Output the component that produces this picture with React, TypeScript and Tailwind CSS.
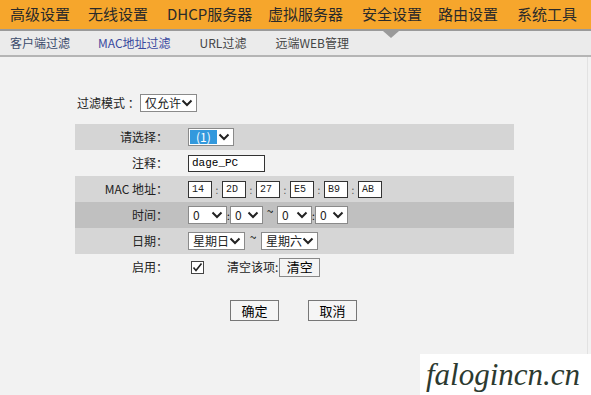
import React from "react";

const font = { fontFamily: '"Noto Sans CJK SC", "Liberation Sans", sans-serif' };

function Sel({ w, text, hl }: { w: number; text: string; hl?: boolean }) {
  return (
    <div
      className="h-[18px] border border-[#8a8a8a] bg-white flex items-center justify-between text-[12px] text-[#222] leading-none"
      style={{ width: w }}
    >
      <span className={hl ? "ml-[1px] h-[14px] px-[6px] bg-[#3399dd] text-white flex items-center" : "pl-[4px]"}>{text}</span>
      <svg width="12" height="10" viewBox="0 0 12 10" className="mr-[3px]">
        <path d="M1.5 2.5 L6 7 L10.5 2.5" stroke="#222" strokeWidth="2" fill="none" />
      </svg>
    </div>
  );
}

function Box({ v }: { v: string }) {
  return (
    <div className="w-[24px] h-[17px] border border-[#333] bg-white text-[10px] pl-[3px] flex items-center text-[#222]" style={{ fontFamily: '"Liberation Mono", monospace' }}>
      {v}
    </div>
  );
}

function Row({ label, bg, children }: { label: string; bg?: string; children: React.ReactNode }) {
  return (
    <div className={`h-[26px] flex items-center ${bg ?? ""}`}>
      <div className="w-[113px] text-right pr-[20px] text-[12px] text-[#222]">{label}</div>
      <div className="flex items-center">{children}</div>
    </div>
  );
}

export default function App() {
  return (
    <div className="w-[591px] h-[395px] bg-[#f2f2f2] relative overflow-hidden" style={font}>
      <div className="h-[29px] bg-[#f6a62c] flex items-center text-[15px] text-[#2a2a2a] pl-[10px] whitespace-nowrap">
        <span className="w-[78px]">高级设置</span>
        <span className="w-[79px]">无线设置</span>
        <span className="w-[101px]">DHCP服务器</span>
        <span className="w-[94px]">虚拟服务器</span>
        <span className="w-[76px]">安全设置</span>
        <span className="w-[79px]">路由设置</span>
        <span>系统工具</span>
      </div>
      <div className="h-[2px] bg-[#9a9a9a]" />
      <div className="h-[26px] bg-[#ebebeb] border-b-[2px] border-[#b5b5b5] flex items-center text-[12px] pl-[10px] relative">
        <div className="absolute left-[383px] top-0 w-0 h-0 border-l-[8px] border-r-[8px] border-t-[7px] border-l-transparent border-r-transparent border-t-[#9a9a9a]" />
        <span className="text-[#3a4a6a] mr-[28px]">客户端过滤</span>
        <span className="text-[#3a4aa0] mr-[29px]">MAC地址过滤</span>
        <span className="text-[#444] mr-[29px]">URL过滤</span>
        <span className="text-[#444]">远端WEB管理</span>
      </div>
      <div className="absolute right-[3px] top-[57px] bottom-0 w-[1px] bg-[#e2e2e2]" />
      <div className="pl-[77px] pt-[37px] flex items-center text-[12px] text-[#222]">
        <span className="w-[63px]">过滤模式 ：</span>
        <Sel w={57} text="仅允许" />
      </div>
      <div className="ml-[75px] w-[439px] mt-[12px]">
        <Row label="请选择：" bg="bg-[#d5d5d5]">
          <Sel w={46} text="(1)" hl />
        </Row>
        <Row label="注释：">
          <div className="w-[77px] h-[17px] border border-[#333] bg-white text-[11px] pl-[3px] flex items-center" style={{ fontFamily: '"Liberation Mono", monospace' }}>dage_PC</div>
        </Row>
        <Row label="MAC 地址：" bg="bg-[#d6d6d6]">
          {["14", "2D", "27", "E5", "B9", "AB"].map((v, i) => (
            <React.Fragment key={v}>
              {i > 0 && <span className="w-[10px] text-center text-[10px] text-[#555]">:</span>}
              <Box v={v} />
            </React.Fragment>
          ))}
        </Row>
        <Row label="时间：" bg="bg-[#c0c0c0]">
          <Sel w={39} text="0" />
          <span className="w-[3px] text-[10px] text-center">:</span>
          <Sel w={33} text="0" />
          <span className="w-[14px] text-center text-[12px] -mt-[8px]">~</span>
          <Sel w={35} text="0" />
          <span className="w-[3px] text-[10px] text-center">:</span>
          <Sel w={33} text="0" />
        </Row>
        <Row label="日期：" bg="bg-[#d6d6d6]">
          <Sel w={57} text="星期日" />
          <span className="w-[16px] text-center text-[12px] -mt-[8px]">~</span>
          <Sel w={57} text="星期六" />
        </Row>
        <Row label="启用：">
          <svg width="13" height="13" viewBox="0 0 13 13" className="ml-[3px]">
            <rect x="0.5" y="0.5" width="12" height="12" fill="#fff" stroke="#444" />
            <path d="M2.5 6.5 L5 9.5 L10.5 2.5" stroke="#222" strokeWidth="1.6" fill="none" />
          </svg>
          <span className="ml-[23px] text-[12px] text-[#222]">清空该项:</span>
          <div className="ml-[1px] w-[41px] h-[19px] border border-[#888] bg-[#f4f4f4] text-[13px] flex items-center justify-center">清空</div>
        </Row>
      </div>
      <div className="flex mt-[20px] pl-[230px] gap-[29px]">
        <div className="w-[49px] h-[21px] border border-[#777] bg-[#f5f5f5] text-[13px] flex items-center justify-center">确定</div>
        <div className="w-[49px] h-[21px] border border-[#777] bg-[#f5f5f5] text-[13px] flex items-center justify-center">取消</div>
      </div>
      <div className="absolute left-[420px] top-[354px] right-0 bottom-0 bg-white flex items-center pl-[6px]">
        <span className="text-[31px] italic text-[#2c3a30] leading-none" style={{ fontFamily: '"Liberation Serif", serif' }}>falogincn.cn</span>
      </div>
    </div>
  );
}
